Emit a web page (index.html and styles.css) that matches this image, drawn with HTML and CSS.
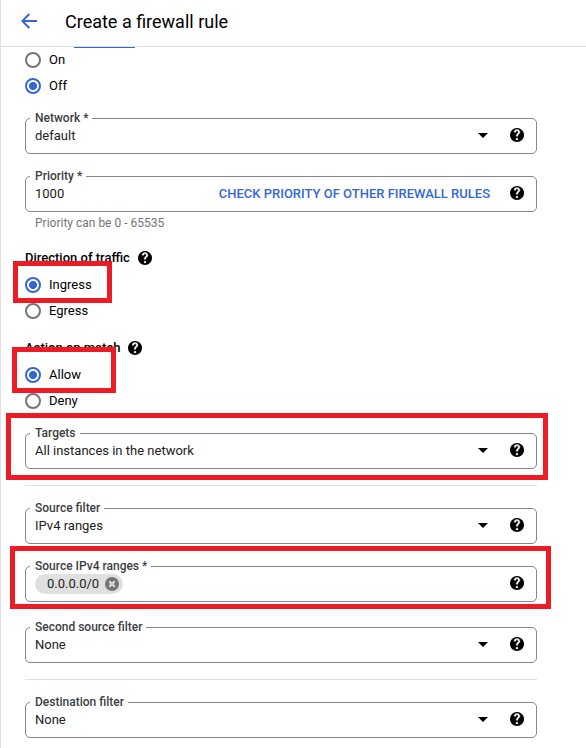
FILE: index.html
```html
<!DOCTYPE html>
<html lang="en">
<head>
<meta charset="utf-8">
<title>Create a firewall rule</title>
<link rel="stylesheet" href="styles.css">
</head>
<body>
<svg class="defs" width="0" height="0" aria-hidden="true">
  <symbol id="help" viewBox="2 2 20 20"><path d="M12 2C6.480 2 2 6.480 2 12s4.480 10 10 10 10-4.480 10-10S17.520 2 12 2z"/><path fill="#fff" stroke="#fff" stroke-width=".5" d="M13.200 19h-2.400v-2.400h2.400V19zm2-8.900l-.9.920c-.73.740-1.100 1.380-1.100 2.780h-2.400v-.5c0-1.100.45-2.100 1.170-2.830l1.240-1.260c.37-.36.59-.86.590-1.310 0-1-.8-1.800-1.800-1.800s-1.800.8-1.800 1.800H7.800C7.800 5.600 9.700 4 12 4s4.200 1.800 4.200 4c0 .9-.4 1.500-1 2.100z"/></symbol>
  <symbol id="caret" viewBox="0 0 10 5"><path d="M0 0h10L5 5z"/></symbol>
</svg>
<div class="page">
  <header class="header">
    <svg class="back" viewBox="0 0 16 16"><path d="M16 8H1.500M8.300 1L1.300 8l7 7" fill="none" stroke="#3367d6" stroke-width="2"/></svg>
    <h1>Create a firewall rule</h1>
  </header>
  <main class="form">
    <div class="link-edge"></div>
    <label class="radio"><i class="dot"></i>On</label>
    <label class="radio"><i class="dot on"></i>Off</label>

    <div class="field first"><span class="label">Network *</span><span class="value">default</span><svg class="caret"><use href="#caret"/></svg><svg class="help"><use href="#help"/></svg></div>
    <div class="field"><span class="label">Priority *</span><span class="value">1000</span><a class="action">CHECK PRIORITY OF OTHER FIREWALL RULES</a><svg class="help"><use href="#help"/></svg></div>
    <p class="hint">Priority can be 0 - 65535</p>

    <section class="group">
      <h2>Direction of traffic<svg class="help"><use href="#help"/></svg></h2>
      <label class="radio"><i class="dot on"></i>Ingress</label>
      <label class="radio"><i class="dot"></i>Egress</label>
      <div class="mark mark-ingress"></div>
    </section>
    <section class="group">
      <h2>Action on match<svg class="help"><use href="#help"/></svg></h2>
      <label class="radio"><i class="dot on"></i>Allow</label>
      <label class="radio"><i class="dot"></i>Deny</label>
      <div class="mark mark-allow"></div>
    </section>

    <div class="field first"><span class="label">Targets</span><span class="value">All instances in the network</span><svg class="caret"><use href="#caret"/></svg><svg class="help"><use href="#help"/></svg><div class="mark mark-targets"></div></div>
    <hr>
    <div class="field"><span class="label">Source filter</span><span class="value">IPv4 ranges</span><svg class="caret"><use href="#caret"/></svg><svg class="help"><use href="#help"/></svg></div>
    <div class="field"><span class="label">Source IPv4 ranges *</span><span class="chip">0.0.0.0/0<svg viewBox="0 0 14 14"><circle cx="7" cy="7" r="7" fill="#757575"/><path d="M4.300 4.300l5.400 5.400m0-5.400l-5.400 5.400" stroke="#e0e0e0" stroke-width="2"/></svg></span><svg class="help"><use href="#help"/></svg><div class="mark mark-ranges"></div></div>
    <div class="field second"><span class="label">Second source filter</span><span class="value">None</span><svg class="caret"><use href="#caret"/></svg><svg class="help"><use href="#help"/></svg></div>
    <hr>
    <div class="field"><span class="label">Destination filter</span><span class="value">None</span><svg class="caret"><use href="#caret"/></svg><svg class="help"><use href="#help"/></svg></div>
  </main>
</div>
</body>
</html>
```
FILE: styles.css
```css
* { box-sizing: border-box; }
body {
  margin: 0;
  background: #fff;
  color: #212121;
  font: 13px/20px Roboto, "Liberation Sans", sans-serif;
}
.defs { position: absolute; }
.page { height: 748px; overflow: hidden; border-left: 1px solid #e0e0e0; }
.header {
  display: flex;
  align-items: center;
  height: 47px;
  padding: 0 0 4px 20px;
  border-bottom: 1px solid #e0e0e0;
}
.back { width: 16px; height: 16px; }
h1 { margin: 0 0 0 28px; padding-top: 2px; font-size: 18px; font-weight: 400; line-height: 24px; color: #000; }
.form { position: relative; width: 536px; padding-left: 24px; }
.link-edge { position: absolute; top: 0; left: 73px; width: 61px; height: 1px; background: #3367d6; }
.radio { display: flex; align-items: center; gap: 8px; height: 26px; color: #000; }
.dot { width: 16px; height: 16px; border: 2px solid #757575; border-radius: 50%; }
.dot.on { border-color: #3367d6; background: radial-gradient(circle, #3367d6 3.700px, #fff 4.300px); }
.field {
  position: relative;
  display: flex;
  align-items: center;
  height: 36px;
  margin-top: 22px;
  padding: 0 12px 2px 9px;
  border: 1px solid #80868b;
  border-radius: 5px;
}
.field.first { margin-top: 19px; }
.field.second { margin-top: 25px; }
.label {
  position: absolute;
  top: -9px;
  left: 4px;
  padding: 0 4px 0 5px;
  background: #fff;
  font-size: 12px;
  line-height: 16px;
  font-weight: 500;
  color: #3c4043;
}
.value { flex: 1; padding-top: 2px; }
.action { margin-right: 20px; padding-top: 2px; color: #3367d6; font-weight: 500; }
.caret { width: 10px; height: 5px; margin-right: 22px; }
.help { flex: none; width: 14px; height: 14px; }
.hint { margin: 1px 0 0 10px; color: #757575; font-size: 12px; }
.group { position: relative; margin-top: 12px; }
.group + .group { margin-top: 11px; }
h2 {
  display: flex;
  align-items: center;
  gap: 8px;
  height: 26px;
  margin: 0 0 1px;
  font-size: 13px;
  font-weight: 500;
  color: #000;
}
.chip {
  display: flex;
  align-items: center;
  gap: 6px;
  height: 20px;
  margin: 2px auto 0 0;
  padding: 0 4px 0 12px;
  border-radius: 10px;
  background: #e0e0e0;
}
.chip svg { width: 14px; height: 14px; }
hr { height: 1px; margin: 16px 0 0; border: 0; background: #e0e0e0; }
.mark { position: absolute; border: 5px solid #ed1c24; }
.mark-ingress { left: -12px; top: 16px; width: 99px; height: 42px; }
.mark-allow { left: -13px; top: 12px; width: 104px; height: 46px; }
.mark-targets { left: -20px; top: -21px; width: 542px; height: 67px; }
.mark-ranges { left: -16px; top: -21px; width: 541px; height: 63px; }
```
